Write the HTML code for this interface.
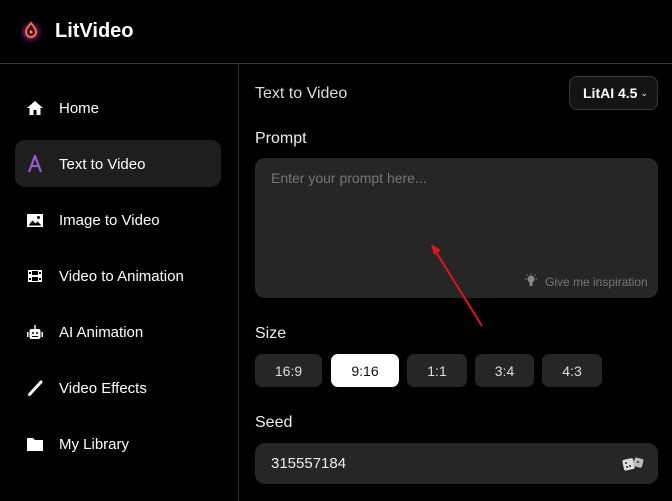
<!DOCTYPE html>
<html><head><meta charset="utf-8"><style>
*{margin:0;padding:0;box-sizing:border-box}
body{width:672px;height:501px;background:#000;font-family:"Liberation Sans",sans-serif;color:#fff;position:relative;overflow:hidden}
.a{position:absolute}
.hl{left:0;top:63px;width:672px;height:1px;background:#3a3a3a}
.vl{left:238px;top:64px;width:1px;height:437px;background:#2e2e2e}
.nav{left:15px;width:206px;height:47px;border-radius:10px;display:flex;align-items:center;font-size:15px}
.nav svg{position:absolute;left:11px}
.nav span{position:absolute;left:44px;top:16px}
.lab{font-size:16px;color:#eee}
.btn{top:354px;height:33px;border-radius:7px;background:#262626;color:#ddd;font-size:14px;display:flex;align-items:center;justify-content:center}
</style></head><body>
<div class="a" style="left:18px;top:18px;width:26px;height:26px">
<svg width="26" height="26" viewBox="0 0 26 26"><defs><radialGradient id="g"><stop offset="0" stop-color="#ff4d7a" stop-opacity=".8"/><stop offset=".6" stop-color="#a02a90" stop-opacity=".4"/><stop offset="1" stop-color="#7a1fa0" stop-opacity="0"/></radialGradient></defs><circle cx="13" cy="14" r="12" fill="url(#g)"/><path d="M13 5C11 8 8 10 8 14a5 5 0 0 0 10 0c0-4-3-6-5-9z" fill="#3a0a10" stroke="#ff6a4a" stroke-width="2"/><path d="M12 12l3 2-3 2z" fill="#ffb040"/></svg></div>
<div class="a" style="left:55px;top:20px;font-size:20px;font-weight:bold">LitVideo</div>
<div class="a hl"></div><div class="a vl"></div>

<div class="a nav" style="top:84px"><svg width="18" height="18" viewBox="0 0 18 18"><path d="M9 2L1 9h2.5v7h4v-5h3v5h4V9H17z" fill="#fff"/></svg><span>Home</span></div>
<div class="a nav" style="top:140px;background:#1e1e1e"><svg width="18" height="18" viewBox="0 0 18 18"><path d="M3 17L9 1l6 16M5.5 11h7" fill="none" stroke="#9b59d0" stroke-width="2.2"/></svg><span>Text to Video</span></div>
<div class="a nav" style="top:196px"><svg width="18" height="18" viewBox="0 0 18 18"><rect x="1" y="3" width="16" height="13" fill="#fff"/><path d="M2.5 14.5l4-5 3 3 2-2 4 4z" fill="#000"/><circle cx="12.5" cy="6.5" r="1.5" fill="#000"/></svg><span>Image to Video</span></div>
<div class="a nav" style="top:252px"><svg width="18" height="18" viewBox="0 0 18 18"><rect x="2" y="3" width="14" height="12" fill="#fff"/><rect x="6" y="4" width="6" height="4" fill="#000"/><rect x="6" y="10" width="6" height="4" fill="#000"/><rect x="3" y="5" width="2" height="2" fill="#000"/><rect x="3" y="11" width="2" height="2" fill="#000"/><rect x="13" y="5" width="2" height="2" fill="#000"/><rect x="13" y="11" width="2" height="2" fill="#000"/></svg><span>Video to Animation</span></div>
<div class="a nav" style="top:308px"><svg width="18" height="18" viewBox="0 0 18 18"><rect x="3.5" y="6" width="11" height="10" rx="2" fill="#fff"/><rect x="8.3" y="2" width="1.4" height="4" fill="#fff"/><rect x="1" y="9" width="1.5" height="5" fill="#fff"/><rect x="15.5" y="9" width="1.5" height="5" fill="#fff"/><circle cx="7" cy="10" r="1" fill="#000"/><circle cx="11" cy="10" r="1" fill="#000"/><rect x="6" y="13" width="6" height="1" fill="#000"/></svg><span>AI Animation</span></div>
<div class="a nav" style="top:364px"><svg width="18" height="18" viewBox="0 0 18 18"><path d="M3.5 15.5L15 3" stroke="#fff" stroke-width="3" stroke-linecap="round"/></svg><span>Video Effects</span></div>
<div class="a nav" style="top:420px"><svg width="18" height="18" viewBox="0 0 18 18"><path d="M1 3h6l2 2h8v11H1z" fill="#fff"/></svg><span>My Library</span></div>

<div class="a" style="left:255px;top:85px;font-size:16px;color:#ddd">Text to Video</div>
<div class="a" style="left:569px;top:76px;width:89px;height:34px;border:1px solid #3a3a3a;border-radius:8px;background:#141414;font-size:14px;font-weight:bold;display:flex;align-items:center;padding-left:13px">LitAI 4.5<span style="font-size:9px;margin-left:3px;font-weight:normal">&#8964;</span></div>
<div class="a lab" style="left:255px;top:130px">Prompt</div>
<div class="a" style="left:255px;top:158px;width:403px;height:140px;background:#262626;border-radius:10px"></div>
<div class="a" style="left:271px;top:170px;font-size:14px;color:#777">Enter your prompt here...</div>
<svg class="a" style="left:524px;top:273px" width="14" height="16" viewBox="0 0 14 16"><circle cx="7" cy="6" r="3.5" fill="#888"/><rect x="5.5" y="9" width="3" height="4" fill="#888"/><path d="M7 0v1.5M1 6h1.5M11.5 6H13M2.5 1.5l1 1M11.5 1.5l-1 1" stroke="#888" stroke-width="1"/></svg>
<div class="a" style="left:545px;top:275px;font-size:12px;color:#777">Give me inspiration</div>
<svg class="a" style="left:0;top:0" width="672" height="501"><line x1="482" y1="326" x2="436" y2="252" stroke="#e0141c" stroke-width="2"/><path d="M431 244l10 6-7 5z" fill="#e0141c"/></svg>
<div class="a lab" style="left:255px;top:325px">Size</div>
<div class="a btn" style="left:255px;width:67px">16:9</div>
<div class="a btn" style="left:331px;width:68px;background:#fff;color:#111">9:16</div>
<div class="a btn" style="left:407px;width:60px">1:1</div>
<div class="a btn" style="left:475px;width:59px">3:4</div>
<div class="a btn" style="left:542px;width:60px">4:3</div>
<div class="a lab" style="left:255px;top:414px">Seed</div>
<div class="a" style="left:255px;top:443px;width:403px;height:41px;background:#262626;border-radius:10px"></div>
<div class="a" style="left:271px;top:455px;font-size:15px;color:#eee">315557184</div>
<svg class="a" style="left:621px;top:455px" width="26" height="18" viewBox="0 0 26 18"><rect x="2" y="4" width="11" height="11" rx="2" fill="#ddd" transform="rotate(-12 7 9)"/><rect x="13" y="3" width="9" height="9" rx="2" fill="#bbb" transform="rotate(15 17 7)"/><circle cx="5" cy="8" r="1" fill="#222"/><circle cx="9" cy="11" r="1" fill="#222"/><circle cx="6" cy="12" r="1" fill="#222"/><circle cx="17" cy="7" r="1" fill="#222"/></svg>
</body></html>
